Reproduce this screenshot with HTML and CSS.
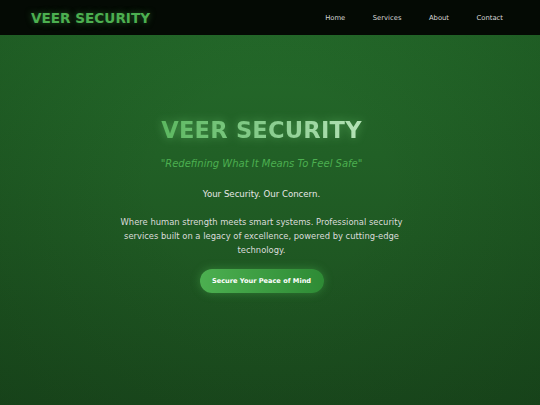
FILE: index.html
```html
<!doctype html>
<html lang="en">
<head>
	<meta charset="UTF-8">
	<title>Veer Security</title>
	<link rel="stylesheet" href="styles.css">
</head>
<body>
	<header class="topbar">
		<a href="#" class="logo">VEER SECURITY</a>
		<nav class="menu">
			<a href="#">Home</a>
			<a href="#">Services</a>
			<a href="#">About</a>
			<a href="#">Contact</a>
		</nav>
	</header>

	<section class="hero">
		<h1 class="hero-title">VEER SECURITY</h1>
		<p class="hero-quote">"Redefining What It Means To Feel Safe"</p>
		<p class="hero-tag">Your Security. Our Concern.</p>
		<p class="hero-text">Where human strength meets smart systems. Professional security services built on a legacy of excellence, powered by cutting-edge technology.</p>
		<a href="#" class="hero-btn">Secure Your Peace of Mind</a>
	</section>
</body>
</html>
```

FILE: styles.css
```css
html, body {height: 100%; margin: 0; font-family: "DejaVu Sans", Verdana, sans-serif;}

body {
	display: flex;
	flex-direction: column;
	background: #1d4f20;
}

.topbar {
	height: 35px;
	display: flex;
	align-items: center;
	justify-content: space-between;
	padding: 0 37px 0 31px;
	background: #040a04;
	box-sizing: border-box;
}
.logo {
	color: #4caf50;
	font-weight: bold; font-size: 13.6px;
	text-decoration: none;
	text-shadow: 0 0 6px rgba(76,175,80,.5);
}
.menu {
	display: flex;
	gap: 27.5px;
}
.menu a {
	color: #d8d8d8;
	font-size: 6.8px;
	text-decoration: none;
}

.hero {
	flex: 1;
	display: flex;
	flex-direction: column;
	align-items: center;
	padding: 82px 17px 0 0;
	text-align: center;
	background:
		radial-gradient(ellipse at 50% 40%, rgba(40,110,45,.0) 30%, rgba(10,40,12,.25) 100%),
		linear-gradient(180deg, #246a2a 0%, #1f5923 55%, #1b4b1e 100%);
}
.hero-title {
	margin: 0;
	font-size: 22.6px; letter-spacing: .2px;
	background: linear-gradient(90deg, #5cb860 0%, #8fd094 60%, #b5e3b7 100%);
	-webkit-background-clip: text;
	background-clip: text;
	color: transparent;
	filter: drop-shadow(0 0 5px rgba(120,210,125,.45));
}
.hero-quote {
	margin: 15px 0 0;
	color: #4caf50;
	font-style: italic; font-size: 10px;
}
.hero-tag {
	margin: 20px 0 0;
	color: #e6e6e6;
	font-size: 8.6px;
}
.hero-text {
	margin: 16px 0 0;
	max-width: 296px;
	color: #dcdcdc;
	font-size: 8.4px; line-height: 14px;
}
.hero-btn {
	margin-top: 12px;
	width: 124px; height: 24px;
	display: flex;
	align-items: center;
	justify-content: center;
	border-radius: 12px;
	background: linear-gradient(90deg, #4caf50, #2e8b35);
	box-shadow: 0 0 10px rgba(76,175,80,.45);
	color: #fff;
	font-weight: bold; font-size: 6.6px;
	text-decoration: none;
}
```
